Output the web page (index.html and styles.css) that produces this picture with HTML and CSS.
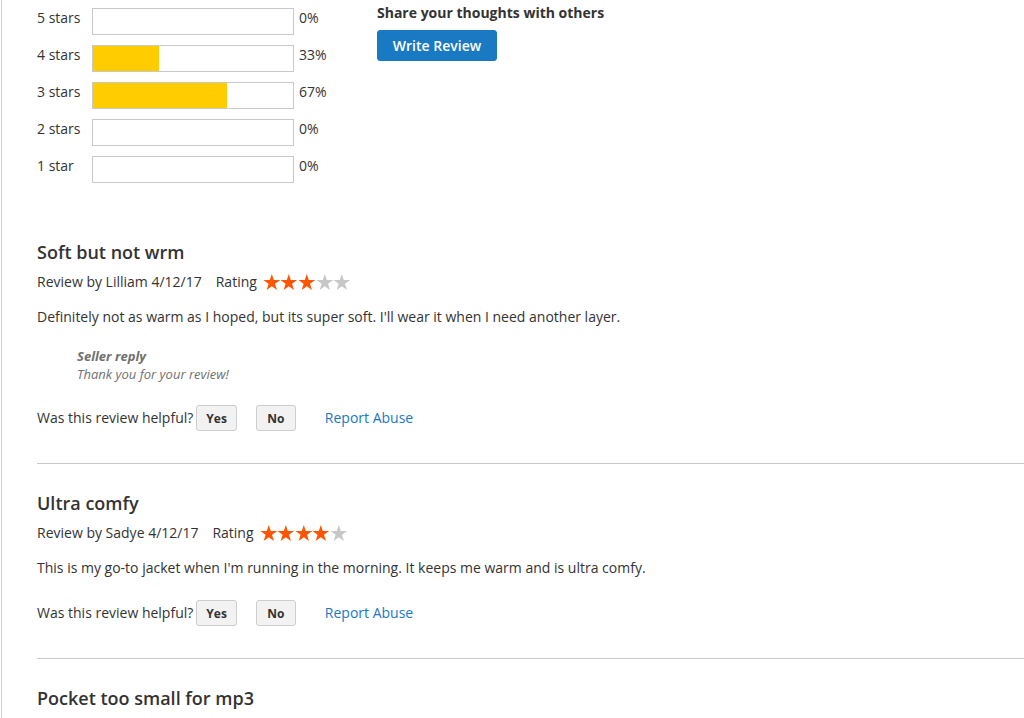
FILE: index.html
```html
<!DOCTYPE html>
<html lang="en">
<head>
  <meta charset="UTF-8" />
  <title>Customer Reviews</title>
  <link rel="stylesheet" href="styles.css">
</head>
<body>

  <div class="page">

    <section class="summary">
      <div class="rating-bars">
        <div class="bar-row">
          <span class="bar-label">5 stars</span>
          <div class="bar"><div class="bar-fill" style="width: 0%;"></div></div>
          <span class="bar-pct">0%</span>
        </div>
        <div class="bar-row">
          <span class="bar-label">4 stars</span>
          <div class="bar"><div class="bar-fill" style="width: 33%;"></div></div>
          <span class="bar-pct">33%</span>
        </div>
        <div class="bar-row">
          <span class="bar-label">3 stars</span>
          <div class="bar"><div class="bar-fill" style="width: 67%;"></div></div>
          <span class="bar-pct">67%</span>
        </div>
        <div class="bar-row">
          <span class="bar-label">2 stars</span>
          <div class="bar"><div class="bar-fill" style="width: 0%;"></div></div>
          <span class="bar-pct">0%</span>
        </div>
        <div class="bar-row">
          <span class="bar-label">1 star</span>
          <div class="bar"><div class="bar-fill" style="width: 0%;"></div></div>
          <span class="bar-pct">0%</span>
        </div>
      </div>

      <div class="write-box">
        <h3>Share your thoughts with others</h3>
        <button class="btn-primary">Write Review</button>
      </div>
    </section>

    <section class="reviews">

      <div class="review">
        <h2 class="review-title">Soft but not wrm</h2>
        <div class="review-meta">
          <span>Review by Lilliam 4/12/17</span>
          <span class="rating">Rating
            <span class="stars">
              <svg class="star on" viewBox="0 0 17.6 16"><polygon points="8.8,0 10.78,6.08 17.17,6.08 12,9.84 13.97,15.92 8.8,12.16 3.63,15.92 5.6,9.84 0.43,6.08 6.82,6.08"/></svg>
              <svg class="star on" viewBox="0 0 17.6 16"><polygon points="8.8,0 10.78,6.08 17.17,6.08 12,9.84 13.97,15.92 8.8,12.16 3.63,15.92 5.6,9.84 0.43,6.08 6.82,6.08"/></svg>
              <svg class="star on" viewBox="0 0 17.6 16"><polygon points="8.8,0 10.78,6.08 17.17,6.08 12,9.84 13.97,15.92 8.8,12.16 3.63,15.92 5.6,9.84 0.43,6.08 6.82,6.08"/></svg>
              <svg class="star" viewBox="0 0 17.6 16"><polygon points="8.8,0 10.78,6.08 17.17,6.08 12,9.84 13.97,15.92 8.8,12.16 3.63,15.92 5.6,9.84 0.43,6.08 6.82,6.08"/></svg>
              <svg class="star" viewBox="0 0 17.6 16"><polygon points="8.8,0 10.78,6.08 17.17,6.08 12,9.84 13.97,15.92 8.8,12.16 3.63,15.92 5.6,9.84 0.43,6.08 6.82,6.08"/></svg>
            </span>
          </span>
        </div>
        <p class="review-text">Definitely not as warm as I hoped, but its super soft. I'll wear it when I need another layer.</p>
        <div class="seller-reply">
          <strong>Seller reply</strong>
          <span>Thank you for your review!</span>
        </div>
        <div class="helpful">
          <span>Was this review helpful?</span>
          <button class="btn-small">Yes</button>
          <button class="btn-small btn-no">No</button>
          <a href="#" class="report">Report Abuse</a>
        </div>
      </div>

      <div class="review">
        <h2 class="review-title">Ultra comfy</h2>
        <div class="review-meta">
          <span>Review by Sadye 4/12/17</span>
          <span class="rating">Rating
            <span class="stars">
              <svg class="star on" viewBox="0 0 17.6 16"><polygon points="8.8,0 10.78,6.08 17.17,6.08 12,9.84 13.97,15.92 8.8,12.16 3.63,15.92 5.6,9.84 0.43,6.08 6.82,6.08"/></svg>
              <svg class="star on" viewBox="0 0 17.6 16"><polygon points="8.8,0 10.78,6.08 17.17,6.08 12,9.84 13.97,15.92 8.8,12.16 3.63,15.92 5.6,9.84 0.43,6.08 6.82,6.08"/></svg>
              <svg class="star on" viewBox="0 0 17.6 16"><polygon points="8.8,0 10.78,6.08 17.17,6.08 12,9.84 13.97,15.92 8.8,12.16 3.63,15.92 5.6,9.84 0.43,6.08 6.82,6.08"/></svg>
              <svg class="star on" viewBox="0 0 17.6 16"><polygon points="8.8,0 10.78,6.08 17.17,6.08 12,9.84 13.97,15.92 8.8,12.16 3.63,15.92 5.6,9.84 0.43,6.08 6.82,6.08"/></svg>
              <svg class="star" viewBox="0 0 17.6 16"><polygon points="8.8,0 10.78,6.08 17.17,6.08 12,9.84 13.97,15.92 8.8,12.16 3.63,15.92 5.6,9.84 0.43,6.08 6.82,6.08"/></svg>
            </span>
          </span>
        </div>
        <p class="review-text">This is my go-to jacket when I'm running in the morning. It keeps me warm and is ultra comfy.</p>
        <div class="helpful">
          <span>Was this review helpful?</span>
          <button class="btn-small">Yes</button>
          <button class="btn-small btn-no">No</button>
          <a href="#" class="report">Report Abuse</a>
        </div>
      </div>

      <div class="review review-last">
        <h2 class="review-title">Pocket too small for mp3</h2>
      </div>

    </section>

  </div>

</body>
</html>
```

FILE: styles.css
```css
* {
  margin: 0;
  padding: 0;
  box-sizing: border-box;
  font-family: "Open Sans", Arial, sans-serif;
}

body {
  background: #fff;
  color: #333;
  font-size: 14px;
  line-height: 20px;
  overflow: hidden;
  height: 100vh;
}

.page {
  margin-left: 1px;
  min-height: 100vh;
  border-left: 1px solid #d1d1d1;
  padding-left: 35px;
}

/* rating summary */

.summary {
  display: flex;
}

.rating-bars {
  width: 340px;
  padding-top: 8px;
}

.bar-row {
  display: flex;
  align-items: flex-start;
  height: 27px;
  margin-bottom: 10px;
}

.bar-row:last-child {
  margin-bottom: 0;
}

.bar-label {
  width: 55px;
}

.bar {
  width: 202px;
  height: 27px;
  border: 1px solid #c9c9c9;
  background: #fff;
}

.bar-fill {
  height: 100%;
  background: #ffcc00;
}

.bar-pct {
  margin-left: 5px;
}

.write-box {
  padding-top: 3px;
}

.write-box h3 {
  font-size: 14px;
  font-weight: 700;
  line-height: 20px;
  margin-bottom: 7px;
}

.btn-primary {
  width: 120px;
  height: 31px;
  background: #1979c3;
  color: #fff;
  border: 1px solid #1979c3;
  border-radius: 3px;
  font-size: 14px;
  font-weight: 600;
  cursor: pointer;
}

/* review list */

.reviews {
  margin-top: 30px;
}

.review {
  padding: 27px 0 32px;
  border-bottom: 1px solid #c9c9c9;
}

.review-last {
  padding-bottom: 0;
  border-bottom: none;
}

.review-title {
  font-size: 18px;
  font-weight: 600;
  line-height: 24px;
}

.review-meta {
  display: flex;
  align-items: center;
  margin-top: 8px;
}

.rating {
  display: flex;
  align-items: center;
  margin-left: 14px;
}

.stars {
  display: flex;
  margin-left: 6px;
}

.star {
  width: 17.6px;
  height: 16px;
  fill: #c7c7c7;
}

.star.on {
  fill: #ff5501;
}

.review-text {
  margin-top: 15px;
}

.seller-reply {
  margin: 20px 0 0 40px;
  font-size: 13px;
  line-height: 18px;
  font-style: italic;
  color: #707070;
}

.seller-reply strong,
.seller-reply span {
  display: block;
}

.helpful {
  display: flex;
  align-items: center;
  margin-top: 22px;
}

.btn-small {
  height: 26px;
  min-width: 40px;
  padding: 0 9px;
  margin-left: 3px;
  background: #f2f2f2;
  border: 1px solid #cdcdcd;
  border-radius: 3px;
  color: #333;
  font-size: 12px;
  font-weight: 700;
  cursor: pointer;
}

.btn-no {
  margin-left: 19px;
}

.report {
  margin-left: 29px;
  color: #1979c3;
  text-decoration: none;
}
```
